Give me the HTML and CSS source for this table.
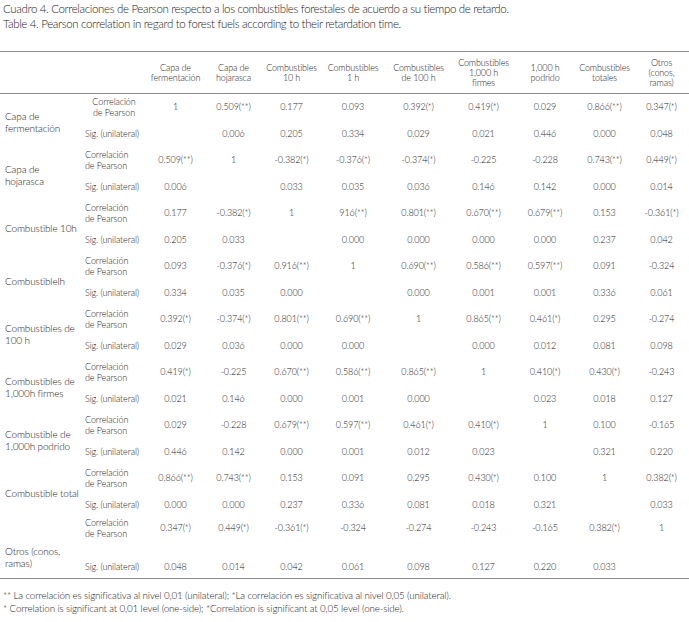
FILE: index.html
```html
<!DOCTYPE html>
<html lang="es">
<head>
<meta charset="utf-8">
<title>Cuadro 4</title>
<link rel="stylesheet" href="styles.css">
</head>
<body>
<div class="caption">
  <p>Cuadro 4. Correlaciones de Pearson respecto a los combustibles forestales de acuerdo a su tiempo de retardo.</p>
  <p>Table 4. Pearson correlation in regard to forest fuels according to their retardation time.</p>
</div>
<table class="corr">
  <colgroup>
    <col class="c-label"><col class="c-stat">
    <col class="c1"><col class="c2"><col class="c3"><col class="c4"><col class="c5"><col class="c6"><col class="c7"><col class="c8"><col class="c9">
  </colgroup>
  <thead>
    <tr>
      <th></th><th></th>
      <th>Capa de<br>fermentación</th>
      <th>Capa de<br>hojarasca</th>
      <th>Combustibles<br>10 h</th>
      <th>Combustibles<br>1 h</th>
      <th>Combustibles<br>de 100 h</th>
      <th>Combustibles<br>1,000 h<br>firmes</th>
      <th>1,000 h<br>podrido</th>
      <th>Combustibles<br>totales</th>
      <th>Otros<br>(conos,<br>ramas)</th>
    </tr>
  </thead>
  <tbody>
    <tr class="r-corr">
      <td class="label" rowspan="2">Capa de<br>fermentación</td>
      <td class="stat center">Correlación<br>de Pearson</td>
      <td>1</td><td>0.509(**)</td><td>0.177</td><td>0.093</td><td>0.392(*)</td><td>0.419(*)</td><td>0.029</td><td>0.866(**)</td><td>0.347(*)</td>
    </tr>
    <tr class="r-sig">
      <td class="stat">Sig. (unilateral)</td>
      <td></td><td>0.006</td><td>0.205</td><td>0.334</td><td>0.029</td><td>0.021</td><td>0.446</td><td>0.000</td><td>0.048</td>
    </tr>
    <tr class="r-corr">
      <td class="label" rowspan="2">Capa de<br>hojarasca</td>
      <td class="stat">Correlación<br>de Pearson</td>
      <td>0.509(**)</td><td>1</td><td>-0.382(*)</td><td>-0.376(*)</td><td>-0.374(*)</td><td>-0.225</td><td>-0.228</td><td>0.743(**)</td><td>0.449(*)</td>
    </tr>
    <tr class="r-sig">
      <td class="stat">Sig. (unilateral)</td>
      <td>0.006</td><td></td><td>0.033</td><td>0.035</td><td>0.036</td><td>0.146</td><td>0.142</td><td>0.000</td><td>0.014</td>
    </tr>
    <tr class="r-corr">
      <td class="label" rowspan="2">Combustible 10h</td>
      <td class="stat">Correlación<br>de Pearson</td>
      <td>0.177</td><td>-0.382(*)</td><td>1</td><td>916(**)</td><td>0.801(**)</td><td>0.670(**)</td><td>0.679(**)</td><td>0.153</td><td>-0.361(*)</td>
    </tr>
    <tr class="r-sig">
      <td class="stat">Sig. (unilateral)</td>
      <td>0.205</td><td>0.033</td><td></td><td>0.000</td><td>0.000</td><td>0.000</td><td>0.000</td><td>0.237</td><td>0.042</td>
    </tr>
    <tr class="r-corr">
      <td class="label" rowspan="2">Combustiblelh</td>
      <td class="stat">Correlación<br>de Pearson</td>
      <td>0.093</td><td>-0.376(*)</td><td>0.916(**)</td><td>1</td><td>0.690(**)</td><td>0.586(**)</td><td>0.597(**)</td><td>0.091</td><td>-0.324</td>
    </tr>
    <tr class="r-sig">
      <td class="stat">Sig. (unilateral)</td>
      <td>0.334</td><td>0.035</td><td>0.000</td><td></td><td>0.000</td><td>0.001</td><td>0.001</td><td>0.336</td><td>0.061</td>
    </tr>
    <tr class="r-corr">
      <td class="label" rowspan="2">Combustibles de<br>100 h</td>
      <td class="stat">Correlación<br>de Pearson</td>
      <td>0.392(*)</td><td>-0.374(*)</td><td>0.801(**)</td><td>0.690(**)</td><td>1</td><td>0.865(**)</td><td>0.461(*)</td><td>0.295</td><td>-0.274</td>
    </tr>
    <tr class="r-sig">
      <td class="stat">Sig. (unilateral)</td>
      <td>0.029</td><td>0.036</td><td>0.000</td><td>0.000</td><td></td><td>0.000</td><td>0.012</td><td>0.081</td><td>0.098</td>
    </tr>
    <tr class="r-corr">
      <td class="label" rowspan="2">Combustibles de<br>1,000h firmes</td>
      <td class="stat">Correlación<br>de Pearson</td>
      <td>0.419(*)</td><td>-0.225</td><td>0.670(**)</td><td>0.586(**)</td><td>0.865(**)</td><td>1</td><td>0.410(*)</td><td>0.430(*)</td><td>-0.243</td>
    </tr>
    <tr class="r-sig">
      <td class="stat">Sig. (unilateral)</td>
      <td>0.021</td><td>0.146</td><td>0.000</td><td>0.001</td><td>0.000</td><td></td><td>0.023</td><td>0.018</td><td>0.127</td>
    </tr>
    <tr class="r-corr">
      <td class="label" rowspan="2">Combustible de<br>1,000h podrido</td>
      <td class="stat">Correlación<br>de Pearson</td>
      <td>0.029</td><td>-0.228</td><td>0.679(**)</td><td>0.597(**)</td><td>0.461(*)</td><td>0.410(*)</td><td>1</td><td>0.100</td><td>-0.165</td>
    </tr>
    <tr class="r-sig">
      <td class="stat">Sig. (unilateral)</td>
      <td>0.446</td><td>0.142</td><td>0.000</td><td>0.001</td><td>0.012</td><td>0.023</td><td></td><td>0.321</td><td>0.220</td>
    </tr>
    <tr class="r-corr">
      <td class="label" rowspan="2">Combustible total</td>
      <td class="stat">Correlación<br>de Pearson</td>
      <td>0.866(**)</td><td>0.743(**)</td><td>0.153</td><td>0.091</td><td>0.295</td><td>0.430(*)</td><td>0.100</td><td>1</td><td>0.382(*)</td>
    </tr>
    <tr class="r-sig">
      <td class="stat">Sig. (unilateral)</td>
      <td>0.000</td><td>0.000</td><td>0.237</td><td>0.336</td><td>0.081</td><td>0.018</td><td>0.321</td><td></td><td>0.033</td>
    </tr>
    <tr class="r-corr last">
      <td class="label low" rowspan="2">Otros (conos,<br>ramas)</td>
      <td class="stat">Correlación<br>de Pearson</td>
      <td>0.347(*)</td><td>0.449(*)</td><td>-0.361(*)</td><td>-0.324</td><td>-0.274</td><td>-0.243</td><td>-0.165</td><td>0.382(*)</td><td>1</td>
    </tr>
    <tr class="r-sig last">
      <td class="stat">Sig. (unilateral)</td>
      <td>0.048</td><td>0.014</td><td>0.042</td><td>0.061</td><td>0.098</td><td>0.127</td><td>0.220</td><td>0.033</td><td></td>
    </tr>
  </tbody>
</table>
<div class="notes">
  <p>** La correlación es significativa al nivel 0,01 (unilateral); *La correlación es significativa al nivel 0,05 (unilateral).</p>
  <p>* Correlation is significant at 0,01 level (one-side); *Correlation is significant at 0,05 level (one-side).</p>
</div>
</body>
</html>
```

FILE: styles.css
```css
html, body {
  margin: 0;
  padding: 0;
  background: #ffffff;
}

body {
  font-family: Lato, "Open Sans", "Liberation Sans", sans-serif;
  font-weight: 300;
  color: #1e1a1b;
  width: 689px;
}

.caption {
  padding: 1px 0 0 3px;
  height: 51px;
  box-sizing: border-box;
}

.caption p {
  margin: 0;
  font-size: 11.5px;
  line-height: 15px;
  letter-spacing: -0.35px;
  white-space: nowrap;
}

.corr {
  width: 689px;
  border-collapse: collapse;
  table-layout: fixed;
  font-size: 9px;
  letter-spacing: -0.1px;
  border-top: 1px solid #8c8c8c;
  border-bottom: 1px solid #8c8c8c;
}

.c-label { width: 82px; }
.c-stat { width: 64px; }
.c1 { width: 59px; }
.c2 { width: 57px; }
.c3 { width: 59px; }
.c4 { width: 64px; }
.c5 { width: 67px; }
.c6 { width: 63px; }
.c7 { width: 60px; }
.c8 { width: 59px; }
.c9 { width: 55px; }

.corr th {
  font-weight: 300;
  font-size: 9px;
  letter-spacing: -0.15px;
  height: 41px;
  padding: 0;
  line-height: 10px;
  text-align: center;
  vertical-align: middle;
  border-bottom: 1px solid #8c8c8c;
}

.corr td {
  padding: 0;
  text-align: center;
  vertical-align: middle;
  line-height: 10.5px;
  white-space: nowrap;
}

.corr tr.r-corr td { height: 27px; }
.corr tr.r-sig td { height: 26px; }

.corr tr.r-corr.last td { height: 20px; }
.corr tr.r-sig.last td {
  height: 21px;
  padding-top: 18px;
}

.corr td.label {
  text-align: left;
  padding-left: 5px;
  padding-top: 3px;
  font-size: 10px;
  line-height: 12px;
  letter-spacing: -0.15px;
}

.corr td.label.low {
  padding-top: 18px;
}

.corr td.stat {
  text-align: left;
  padding-left: 3px;
}

.corr td.stat.center {
  text-align: center;
  padding-left: 0;
}

.notes {
  padding: 10px 0 0 3px;
}

.notes p {
  margin: 0;
  font-size: 9.8px;
  line-height: 13px;
  letter-spacing: -0.15px;
  white-space: nowrap;
}
```
